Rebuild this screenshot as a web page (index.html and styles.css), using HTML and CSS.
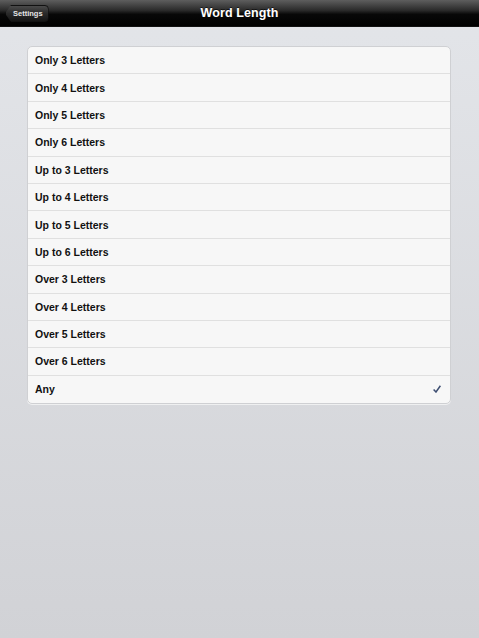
FILE: index.html
```
<!DOCTYPE html>
<html lang="en">
<head>
    <meta charset="UTF-8">
    <meta name="viewport" content="width=device-width, initial-scale=1.0">
    <title>Word Length</title>
    <link rel="stylesheet" href="styles.css">
</head>
<body>
    <header class="navbar">
        <a class="btn-back" href="#">Settings</a>
        <h1>Word Length</h1>
    </header>

    <main class="content">
        <ul class="table-group">
            <li>Only 3 Letters</li>
            <li>Only 4 Letters</li>
            <li>Only 5 Letters</li>
            <li>Only 6 Letters</li>
            <li>Up to 3 Letters</li>
            <li>Up to 4 Letters</li>
            <li>Up to 5 Letters</li>
            <li>Up to 6 Letters</li>
            <li>Over 3 Letters</li>
            <li>Over 4 Letters</li>
            <li>Over 5 Letters</li>
            <li>Over 6 Letters</li>
            <li class="selected">Any
                <svg class="check" width="8" height="8" viewBox="0 0 8 8">
                    <path d="M0.6 4.4 L3 7 L7.4 0.8" fill="none" stroke="#3e4f72" stroke-width="1.5"/>
                </svg>
            </li>
        </ul>
    </main>
</body>
</html>
```

FILE: styles.css
```
* {
    margin: 0;
    padding: 0;
    box-sizing: border-box;
}

html, body {
    height: 100%;
}

body {
    font-family: 'Liberation Sans', Arial, sans-serif;
    background: linear-gradient(to bottom, #e3e5e9 0%, #d1d2d6 100%);
    color: #111;
}

.navbar {
    position: relative;
    height: 27px;
    background: linear-gradient(to bottom, #5e5e5e 0%, #2a2a2a 40%, #080808 55%, #000 100%);
    border-bottom: 1px solid #111;
    display: flex;
    align-items: center;
    justify-content: center;
}

.navbar h1 {
    font-size: 12.5px;
    font-weight: bold;
    color: #fff;
    letter-spacing: 0.1px;
    text-shadow: 0 -1px 0 rgba(0, 0, 0, 0.6);
}

.btn-back {
    position: absolute;
    left: 5px;
    top: 5px;
    height: 17px;
    padding: 0 5px 0 7px;
    display: flex;
    align-items: center;
    font-size: 7.5px;
    font-weight: bold;
    color: #e6e6e6;
    text-decoration: none;
    background: linear-gradient(to bottom, #4a4a4a 0%, #2a2a2a 50%, #151515 100%);
    border: 1px solid #111;
    border-radius: 4px;
    clip-path: polygon(6px 0, 100% 0, 100% 100%, 6px 100%, 0 50%);
}

.content {
    padding: 19px 28px 0 27px;
}

.table-group {
    list-style: none;
    background: #f7f7f7;
    border: 1px solid #cfd0d3;
    border-radius: 5px;
    box-shadow: 0 1px 0 rgba(255, 255, 255, 0.6);
    overflow: hidden;
}

.table-group li {
    height: 27.4px;
    padding: 0 8px 0 7px;
    display: flex;
    align-items: center;
    justify-content: space-between;
    font-size: 10.5px;
    font-weight: bold;
    border-bottom: 1px solid #e0e0e0;
}

.table-group li:last-child {
    border-bottom: none;
}

.check {
    margin-right: 1px;
}
```
